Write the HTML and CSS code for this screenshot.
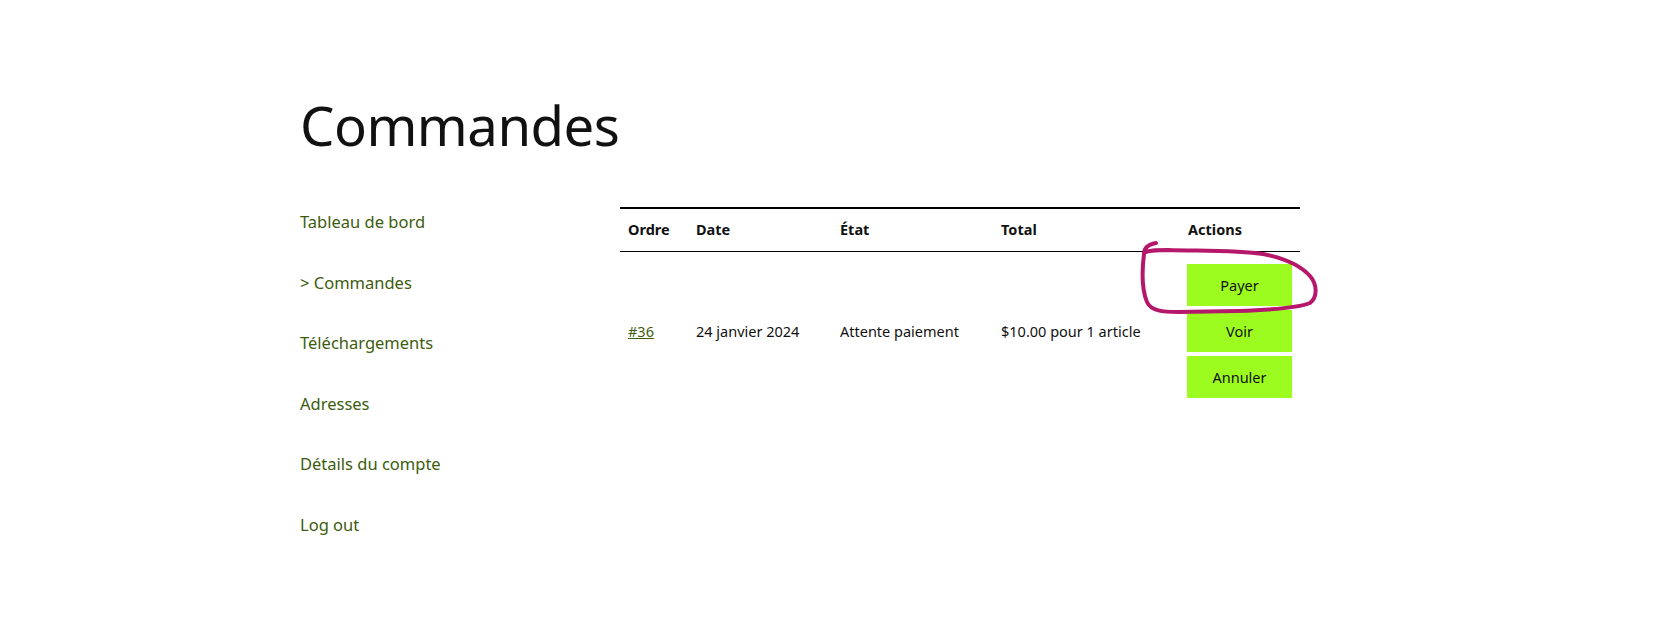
FILE: index.html
```html
<!DOCTYPE html>
<html lang="fr">
<head>
  <meta charset="UTF-8" />
  <meta name="viewport" content="width=device-width, initial-scale=1.0" />
  <title>Commandes</title>
  <link rel="stylesheet" href="styles.css">
</head>
<body>
  <div class="page">
    <h1 class="page-title">Commandes</h1>

    <div class="account">
      <nav class="account-nav">
        <a href="#">Tableau de bord</a>
        <a href="#" class="active">&gt; Commandes</a>
        <a href="#">Téléchargements</a>
        <a href="#">Adresses</a>
        <a href="#">Détails du compte</a>
        <a href="#">Log out</a>
      </nav>

      <table class="orders">
        <thead>
          <tr>
            <th class="col-order">Ordre</th>
            <th class="col-date">Date</th>
            <th class="col-state">État</th>
            <th class="col-total">Total</th>
            <th class="col-actions">Actions</th>
          </tr>
        </thead>
        <tbody>
          <tr>
            <td><a href="#">#36</a></td>
            <td>24 janvier 2024</td>
            <td>Attente paiement</td>
            <td>$10.00 pour 1 article</td>
            <td class="actions">
              <a href="#" class="btn">Payer</a>
              <a href="#" class="btn">Voir</a>
              <a href="#" class="btn">Annuler</a>
            </td>
          </tr>
        </tbody>
      </table>
    </div>

    <!-- hand drawn circle round "Payer" -->
    <svg class="scribble" width="182" height="80" viewBox="0 0 182 80">
      <path d="M18,3 C12,4 6,7 6,14 C4,30 4,50 9,62 C13,71 25,72 40,72 L100,71 C130,70 160,68 172,63 C180,57 179,44 172,36 C163,26 145,18 125,14 C100,10 60,11 30,10 C18,10 10,10 6,13"
            fill="none" stroke="#b5176b" stroke-width="4" stroke-linecap="round" stroke-linejoin="round"/>
    </svg>
  </div>
</body>
</html>
```

FILE: styles.css
```css
body {
  margin: 0;
  font-family: "Noto Sans", "Open Sans", sans-serif;
  color: #111;
  background: #fff;
}
.page {
  position: relative;
  width: 1000px;
  margin-left: 300px;
  padding-top: 85px;
}
.page-title {
  font-size: 54.5px;
  font-weight: 400;
  line-height: 76px;
  margin: 2px 0 44px;
  letter-spacing: -0.5px;
}
.account {
  display: flex;
  align-items: flex-start;
}
.account-nav {
  width: 320px;
  display: flex;
  flex-direction: column;
  gap: 36px;
  padding-top: 3px;
}
.account-nav a {
  color: #3d5c0e;
  text-decoration: none;
  font-size: 16.5px;
  line-height: 24.6px;
}
.orders {
  width: 680px;
  border-collapse: collapse;
  border-top: 2px solid #000;
  font-size: 14.5px;
}
.orders th {
  text-align: left;
  font-weight: 700;
  padding: 9px 8px 10px;
  line-height: 23px;
  border-bottom: 1px solid #000;
}
.col-order { width: 52px; }
.col-date { width: 128px; }
.col-state { width: 145px; }
.col-total { width: 171px; }
.col-actions { width: 104px; }
.orders td {
  padding: 12px 8px;
  vertical-align: middle;
}
.orders td a {
  color: #3d5c0e;
}
.orders td.actions {
  padding-left: 7px;
}
.btn {
  display: block;
  width: 105px;
  height: 42px;
  line-height: 42px;
  margin-bottom: 4px;
  text-align: center;
  background: #9dfc1f;
  color: #111 !important;
  text-decoration: none;
}
.btn:last-child {
  margin-bottom: 0;
}
.scribble {
  position: absolute;
  left: 838px;
  top: 240px;
}
```
